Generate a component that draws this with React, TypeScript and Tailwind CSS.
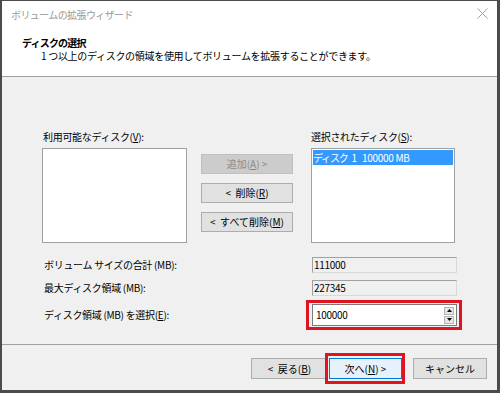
import React from "react";

const font = { fontFamily: '"Noto Sans CJK JP", "Noto Sans", sans-serif' };

function Btn({ children, disabled, primary, className = "" }: { children: React.ReactNode; disabled?: boolean; primary?: boolean; className?: string }) {
  const tone = disabled
    ? "bg-[#cccccc] border-[#bfbfbf] text-[#8a8a8a]"
    : primary
    ? "bg-[#e5f1fb] border-[#0078d7] text-black"
    : "bg-[#e1e1e1] border-[#adadad] text-black";
  return (
    <div className={`flex items-center justify-center border text-[10px] leading-none tracking-normal whitespace-pre ${tone} ${className}`}>
      {children}
    </div>
  );
}

function ReadOnly({ value }: { value: string }) {
  return (
    <div className="w-[145px] h-[16px] flex items-center pl-[1px] bg-[#f0f0f0] border border-[#d9d9d9] border-t-[#a0a0a0] border-l-[#a0a0a0] text-[10px] leading-none">
      {value}
    </div>
  );
}

export default function App() {
  return (
    <div style={font} className="w-[500px] h-[393px] flex flex-col bg-[#f0f0f0] border-t border-l-2 border-r-[3px] border-b-[3px] border-[#4b4b4b] text-black text-[10px] tracking-[-0.3px] overflow-hidden">
      {/* title + header */}
      <div className="bg-white h-[75px] flex flex-col">
        <div className="h-[26px] flex items-center justify-between pl-[9px] pr-[9px]">
          <span className="text-[10px] text-[#9a9a9a] tracking-[-0.6px]">ボリュームの拡張ウィザード</span>
          <svg width="11" height="11" viewBox="0 0 11 11" className="mt-[-2px]">
            <path d="M0.5 0.5 L10.5 10.5 M10.5 0.5 L0.5 10.5" stroke="#a0a0a0" strokeWidth="1" />
          </svg>
        </div>
        <div className="pl-[20px] pt-[10px] font-bold leading-[12px] tracking-[-0.8px]">ディスクの選択</div>
        <div className="pl-[39px] pt-[1px] leading-[12px]">1 つ以上のディスクの領域を使用してボリュームを拡張することができます。</div>
      </div>
      <div className="h-px bg-[#a0a0a0]" />

      {/* body */}
      <div className="h-[267px] flex flex-col pl-[40px]">
        <div className="flex mt-[53px]">
          <div className="w-[145px] flex flex-col">
            <div className="h-[18px] leading-[14px] pl-[1px]">利用可能なディスク(<u>V</u>):</div>
            <div className="h-[95px] bg-white border border-[#a0a0a0]" />
          </div>
          <div className="w-[92px] ml-[14px] pt-[24px] flex flex-col gap-[9px]">
            <Btn disabled className="h-[20px]">追加(<u>A</u>) &gt;</Btn>
            <Btn className="h-[20px]">&lt;  削除(<u>R</u>)</Btn>
            <Btn className="h-[20px]">&lt;  すべて削除(<u>M</u>)</Btn>
          </div>
          <div className="w-[144px] ml-[18px] flex flex-col">
            <div className="h-[18px] leading-[14px]">選択されたディスク(<u>S</u>):</div>
            <div className="h-[95px] bg-white border border-[#a0a0a0] p-px">
              <div className="h-[15px] bg-[#3399ff] text-white leading-[15px] grid grid-cols-[49px_1fr]">
                <span className="flex">
                  <span className="tracking-[-1.2px]">ディスク</span>
                  <span className="ml-[4px]">1</span>
                </span>
                <span>100000 MB</span>
              </div>
            </div>
          </div>
        </div>

        <div className="flex items-center mt-[14px]">
          <div className="w-[270px] leading-none pl-[2px]">ボリューム サイズの合計 (MB):</div>
          <ReadOnly value="111000" />
        </div>
        <div className="flex items-center mt-[7px]">
          <div className="w-[270px] leading-none pl-[2px]">最大ディスク領域 (MB):</div>
          <ReadOnly value="227345" />
        </div>
        <div className="flex items-center mt-[8px]">
          <div className="w-[270px] leading-none pl-[2px]">ディスク領域 (MB) を選択(<u>E</u>):</div>
          <div className="relative w-[145px] h-[22px] bg-white border border-[#7a7a7a] flex items-center justify-between pl-[3px] pr-[2px]">
            <span className="leading-none">100000</span>
            <div className="flex flex-col gap-[1px]">
              <div className="w-[10px] h-[8px] bg-[#e6e6e6] border border-[#b5b5b5] flex items-center justify-center">
                <svg width="5" height="3" viewBox="0 0 5 3"><path d="M0 3 L2.5 0 L5 3 Z" fill="#000" /></svg>
              </div>
              <div className="w-[10px] h-[8px] bg-[#e6e6e6] border border-[#b5b5b5] flex items-center justify-center">
                <svg width="5" height="3" viewBox="0 0 5 3"><path d="M0 0 L2.5 3 L5 0 Z" fill="#000" /></svg>
              </div>
            </div>
            <div className="absolute -left-[7px] -right-[6px] -top-[5px] -bottom-[5px] border-[3px] border-[#e0141e]" />
          </div>
        </div>
      </div>
      <div className="h-px bg-[#a0a0a0]" />

      {/* footer */}
      <div className="flex-1 flex items-start justify-end pt-[13px] pr-[10px]">
        <Btn className="w-[77px] h-[21px]">&lt;  戻る(<u>B</u>)</Btn>
        <div className="relative ml-[1px]">
          <Btn primary className="w-[73px] h-[21px]">次へ(<u>N</u>) &gt;</Btn>
          <div className="absolute -left-[4px] -right-[3px] -top-[5px] -bottom-[5px] border-[3px] border-[#e0141e]" />
        </div>
        <Btn className="w-[74px] h-[21px] ml-[11px]">キャンセル</Btn>
      </div>
    </div>
  );
}
